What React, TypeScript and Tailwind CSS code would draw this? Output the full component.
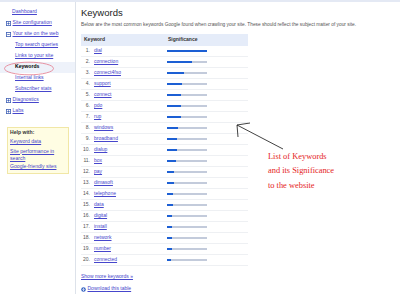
import React from "react";

type Row = { word: string; score: number };

const rows: Row[] = [
  { word: "dial", score: 40 },
  { word: "connection", score: 25 },
  { word: "connect4fso", score: 17 },
  { word: "support", score: 15 },
  { word: "connect", score: 14 },
  { word: "pdo", score: 14 },
  { word: "rup", score: 14 },
  { word: "windows", score: 11 },
  { word: "broadband", score: 10 },
  { word: "dialup", score: 10 },
  { word: "box", score: 8.5 },
  { word: "pay", score: 7 },
  { word: "dimasoft", score: 6.5 },
  { word: "telephone", score: 6 },
  { word: "data", score: 5.5 },
  { word: "digital", score: 4.5 },
  { word: "install", score: 4.5 },
  { word: "network", score: 5 },
  { word: "number", score: 4.5 },
  { word: "connected", score: 4 },
];

const BoxIcon = ({ open }: { open?: boolean }) => (
  <svg width="5" height="5" viewBox="0 0 5 5" className="shrink-0">
    <rect x="0.4" y="0.4" width="4.2" height="4.2" fill="#fff" stroke="#3f5fb5" strokeWidth="0.8" />
    <path d="M1.3 2.5h2.4" stroke="#3f5fb5" strokeWidth="0.8" />
    {!open && <path d="M2.5 1.3v2.4" stroke="#3f5fb5" strokeWidth="0.8" />}
  </svg>
);

const link = "text-[#4646cc] underline decoration-[0.5px]";

const Sidebar = () => (
  <div className="relative w-[76px] shrink-0 border-r border-[#dde2ea] pt-[5px] text-[5.1px]">
    <div className="flex h-[11px] items-center pl-[12px]">
      <span className={link}>Dashboard</span>
    </div>
    <div className="flex h-[11px] items-center gap-[1.5px] pl-[6px]">
      <BoxIcon />
      <span className={link}>Site configuration</span>
    </div>
    <div className="flex h-[11px] items-center gap-[1.5px] pl-[6px]">
      <BoxIcon open />
      <span className={link}>Your site on the web</span>
    </div>
    <div className="flex h-[11px] items-center pl-[15px]">
      <span className={link}>Top search queries</span>
    </div>
    <div className="flex h-[11px] items-center pl-[15px]">
      <span className={link}>Links to your site</span>
    </div>
    <div className="flex h-[11px] items-center bg-[#eef2fa] pl-[15px]">
      <span className="font-bold text-black">Keywords</span>
    </div>
    <div className="flex h-[11px] items-center pl-[15px]">
      <span className={link}>Internal links</span>
    </div>
    <div className="flex h-[11px] items-center pl-[15px]">
      <span className={link}>Subscriber stats</span>
    </div>
    <div className="flex h-[11px] items-center gap-[1.5px] pl-[6px]">
      <BoxIcon />
      <span className={link}>Diagnostics</span>
    </div>
    <div className="flex h-[11px] items-center gap-[1.5px] pl-[6px]">
      <BoxIcon />
      <span className={link}>Labs</span>
    </div>

    <div className="mx-[7px] mt-[10px] w-[62px] border border-[#f1e7a6] bg-[#fffde3] px-[2px] pt-[1px] pb-[1px]">
      <div className="flex h-[9px] items-center font-bold text-[#333]">Help with:</div>
      <div className="flex h-[9px] items-center">
        <span className={link}>Keyword data</span>
      </div>
      <div className="mt-[1px] leading-[7.5px]">
        <span className={link}>Site performance in search</span>
      </div>
      <div className="flex h-[9px] items-center">
        <span className={link}>Google-friendly sites</span>
      </div>
    </div>

    <svg className="absolute left-[3px] top-[59px]" width="52" height="15" viewBox="0 0 52 15">
      <ellipse cx="26" cy="7.5" rx="24.5" ry="6.3" fill="none" stroke="#e47a8c" strokeWidth="0.8" />
    </svg>
  </div>
);

const Main = () => (
  <div className="flex-1 pl-[5px] pt-[5.5px]">
    <h1 className="h-[12px] text-[9.5px] leading-[12px] font-normal text-[#222]">Keywords</h1>
    <p className="mt-[2px] h-[8px] text-[4.8px] leading-[8px] whitespace-nowrap text-[#555]">
      Below are the most common keywords Google found when crawling your site. These should reflect the subject matter of your site.
    </p>
    <div className="mt-[5px] w-[167px] text-[5px]">
      <div className="flex h-[12px] items-center bg-[#e5ecf9] font-bold text-[#333]">
        <div className="w-[86px] pl-[3px]">Keyword</div>
        <div className="pl-[1px]">Significance</div>
      </div>
      {rows.map((r, i) => (
        <div key={r.word} className="flex h-[11px] items-center border-b border-[#eef0f3]">
          <div className="flex w-[86px] items-center">
            <span className="w-[9px] text-right text-[#555]">{i + 1}.</span>
            <span className={`ml-[4px] ${link}`}>{r.word}</span>
          </div>
          <div className="flex h-[2px] w-[40px] bg-[#c3cbdb]">
            <div className="h-full bg-[#1c5fd4]" style={{ width: `${r.score}px` }} />
          </div>
        </div>
      ))}
    </div>
    <div className="mt-[6.5px] flex h-[9px] items-center text-[5px]">
      <span className={link}>Show more keywords »</span>
    </div>
    <div className="mt-[3px] flex h-[9px] items-center gap-[1.5px] text-[5px]">
      <svg width="5" height="5" viewBox="0 0 5 5">
        <circle cx="2.5" cy="2.5" r="2.3" fill="#3a66c4" />
        <path d="M2.5 1.1v2.4M1.4 2.4l1.1 1.1 1.1-1.1" stroke="#fff" strokeWidth="0.7" fill="none" />
      </svg>
      <span className={link}>Download this table</span>
    </div>
  </div>
);

export default function App() {
  return (
    <div className="relative h-[295px] w-[400px] overflow-hidden bg-white font-['Liberation_Sans',Arial,sans-serif]">
      <div className="h-[1.5px] bg-[#e4e9f4]" />
      <div className="flex">
        <Sidebar />
        <Main />
      </div>

      <svg className="absolute left-0 top-0" width="400" height="295" viewBox="0 0 400 295">
        <path d="M237 125L283 149" stroke="#111" strokeWidth="0.8" fill="none" />
        <path d="M250 123L237 125L238 137" stroke="#111" strokeWidth="0.8" fill="none" />
      </svg>

      <div className="absolute left-[268px] top-[150px] font-['Liberation_Serif',serif] text-[8.4px] leading-[14.3px] text-[#e51c1c]">
        <div>List of Keywords</div>
        <div>and its Significance</div>
        <div>to the website</div>
      </div>
    </div>
  );
}
